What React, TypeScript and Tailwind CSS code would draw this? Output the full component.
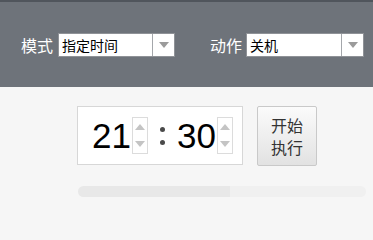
import React from "react";

const cjk = "font-['Noto_Sans_CJK_SC','Noto_Sans',sans-serif]";

function Select({ value, width }: { value: string; width: string }) {
  return (
    <div className={`flex h-[24px] ${width} border border-[#8f9297] bg-white`}>
      <div className={`flex-1 pl-[3px] text-[14px] leading-[22px] text-black ${cjk}`}>{value}</div>
      <div className="flex w-[22px] items-center justify-center border-l border-[#a4a7ab]">
        <svg width="10" height="6" viewBox="0 0 10 6">
          <path d="M0 0h10L5 6z" fill="#9b9b9b" />
        </svg>
      </div>
    </div>
  );
}

function Spinner() {
  return (
    <div className="flex h-[37px] w-[16px] flex-col items-center justify-center gap-[11px] border border-[#dcdcdc] bg-white">
      <svg width="10" height="6" viewBox="0 0 10 6">
        <path d="M0 6h10L5 0z" fill="#c4c4c4" />
      </svg>
      <svg width="10" height="6" viewBox="0 0 10 6">
        <path d="M0 0h10L5 6z" fill="#c4c4c4" />
      </svg>
    </div>
  );
}

export default function App() {
  return (
    <div className="min-h-screen w-[373px] overflow-hidden bg-[#f6f6f6]">
      {/* Header */}
      <div className="h-[2px] bg-[#50555c]"></div>
      <div className="flex h-[85px] items-center bg-[#6e737a] pl-[21px]">
        <span className={`mr-[5px] text-[16px] text-white ${cjk}`}>模式</span>
        <Select value="指定时间" width="w-[117px]" />
        <span className={`ml-[35px] mr-[4px] text-[16px] text-white ${cjk}`}>动作</span>
        <Select value="关机" width="w-[118px]" />
      </div>

      {/* Body */}
      <div className="flex pl-[77px] pt-[19px]">
        <div className="flex h-[59px] w-[166px] items-center border border-[#d7d7d7] bg-white pl-[14px]">
          <span className="w-[40px] text-[35px] leading-none text-black font-['Liberation_Sans',Arial,sans-serif]">21</span>
          <Spinner />
          <div className="flex w-[29px] flex-col items-center gap-[8px]">
            <div className="h-[5px] w-[5px] rounded-full bg-[#4a4a4a]"></div>
            <div className="h-[5px] w-[5px] rounded-full bg-[#4a4a4a]"></div>
          </div>
          <span className="w-[40px] text-[35px] leading-none text-black font-['Liberation_Sans',Arial,sans-serif]">30</span>
          <Spinner />
        </div>
        <button
          className={`ml-[14px] flex h-[60px] w-[60px] flex-col items-center justify-center rounded-[2px] border border-[#c9c9c9] bg-gradient-to-b from-[#fbfbfb] to-[#e2e2e2] text-[16px] leading-[22px] text-[#333] ${cjk}`}
        >
          <span>开始</span>
          <span>执行</span>
        </button>
      </div>

      <div className="ml-[78px] mt-[20px] flex h-[11px] w-[288px] overflow-hidden rounded-full">
        <div className="w-[152px] bg-[#e8e8e8]"></div>
        <div className="flex-1 bg-[#f0f0f0]"></div>
      </div>
    </div>
  );
}
